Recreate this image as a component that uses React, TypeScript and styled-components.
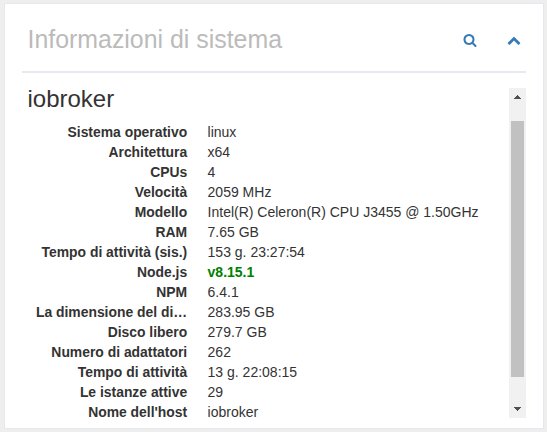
import React from "react";
import styled, { createGlobalStyle } from "styled-components";

const GlobalStyle = createGlobalStyle`
  * { box-sizing: border-box; }
  body {
    margin: 0;
    background: #eeeeee;
    color: #333333;
    font: 14px/20px "Liberation Sans", Arial, sans-serif;
    overflow: hidden;
  }
`;

const Page = styled.main`
  height: 432px;
  padding: 3px 3px 3px 4px;
`;

const Panel = styled.section`
  width: 540px;
  height: 426px;
  padding: 0 17px;
  border: 1px solid #e4e7eb;
  background: #ffffff;
`;

const PanelHeader = styled.header`
  display: flex;
  align-items: flex-start;
  height: 69px;
  border-bottom: 2px solid #e6e9ed;
  padding: 18px 5px 0 5.5px;
`;

const PanelTitle = styled.h2`
  flex: 1;
  margin: 0;
  color: #bbbbbb;
  font-size: 24.9px;
  font-weight: 400;
  line-height: 34px;
  white-space: nowrap;
`;

const Tools = styled.div`
  display: flex;
  gap: 30px;
  padding-top: 11px;
`;

const ToolButton = styled.button`
  display: block;
  width: 14px;
  height: 14px;
  padding: 0;
  border: 0;
  background: none;
  color: #337ab7;
`;

const Glyph = styled.svg`
  display: block;
  fill: currentColor;
`;

const PanelBody = styled.div`
  display: flex;
  height: 330px;
  margin-top: 15px;
`;

const Content = styled.div`
  flex: 1;
  min-width: 0;
`;

const HostName = styled.h3`
  margin: 0 0 12px;
  padding-left: 5.5px;
  font-size: 24px;
  font-weight: 400;
  line-height: 22px;
`;

const InfoList = styled.dl`
  display: grid;
  grid-template-columns: 160px 1fr;
  column-gap: 20.4px;
  grid-auto-rows: 20px;
  margin: 0;
  padding-left: 5.2px;
`;

const Label = styled.dt`
  font-weight: 700;
  font-size: 13.9px;
  text-align: right;
  white-space: nowrap;
`;

const Value = styled.dd<{ $current?: boolean }>`
  margin: 0;
  white-space: nowrap;
  color: ${(p) => (p.$current ? "#008000" : "inherit")};
  font-weight: ${(p) => (p.$current ? 700 : 400)};
`;

const Scrollbar = styled.div`
  display: flex;
  flex-direction: column;
  align-items: center;
  width: 17px;
  background: #f1f1f1;
`;

const ScrollArrow = styled.svg`
  display: block;
  flex: none;
  width: 17px;
  height: 17px;
  fill: #505050;
`;

const Track = styled.div`
  flex: 1;
  width: 13px;
  padding-top: 16px;
`;

const Thumb = styled.div`
  height: 256px;
  background: #c1c1c1;
`;

const info: { label: string; value: string; current?: boolean }[] = [
  { label: "Sistema operativo", value: "linux" },
  { label: "Architettura", value: "x64" },
  { label: "CPUs", value: "4" },
  { label: "Velocità", value: "2059 MHz" },
  { label: "Modello", value: "Intel(R) Celeron(R) CPU J3455 @ 1.50GHz" },
  { label: "RAM", value: "7.65 GB" },
  { label: "Tempo di attività (sis.)", value: "153 g. 23:27:54" },
  { label: "Node.js", value: "v8.15.1", current: true },
  { label: "NPM", value: "6.4.1" },
  { label: "La dimensione del di…", value: "283.95 GB" },
  { label: "Disco libero", value: "279.7 GB" },
  { label: "Numero di adattatori", value: "262" },
  { label: "Tempo di attività", value: "13 g. 22:08:15" },
  { label: "Le istanze attive", value: "29" },
  { label: "Nome dell'host", value: "iobroker" },
];

const SearchIcon = () => (
  <Glyph width="14" height="14" viewBox="0 0 1792 1792" aria-hidden="true">
    <path d="M1216 832q0-185-131.500-316.500t-316.500-131.500-316.500 131.500-131.500 316.500 131.500 316.500 316.500 131.500 316.500-131.500 131.500-316.500zm512 832q0 52-38 90t-90 38q-54 0-90-38l-343-342q-179 124-399 124-143 0-273.500-55.500t-225-150-150-225-55.500-273.500 55.500-273.500 150-225 225-150 273.500-55.500 273.500 55.500 225 150 150 225 55.500 273.500q0 220-124 399l343 343q37 37 37 90z" />
  </Glyph>
);

const ChevronUpIcon = () => (
  <Glyph width="14" height="14" viewBox="0 0 1792 1792" aria-hidden="true">
    <path d="M1683 1331l-166 165q-19 19-45 19t-45-19l-531-531-531 531q-19 19-45 19t-45-19l-166-165q-19-19-19-45.500t19-45.500l742-741q19-19 45-19t45 19l742 741q19 19 19 45.500t-19 45.500z" />
  </Glyph>
);

export default function App() {
  return (
    <>
      <GlobalStyle />
      <Page>
        <Panel>
          <PanelHeader>
            <PanelTitle>Informazioni di sistema</PanelTitle>
            <Tools>
              <ToolButton aria-label="Cerca">
                <SearchIcon />
              </ToolButton>
              <ToolButton aria-label="Comprimi">
                <ChevronUpIcon />
              </ToolButton>
            </Tools>
          </PanelHeader>
          <PanelBody>
            <Content>
              <HostName>iobroker</HostName>
              <InfoList>
                {info.map((item) => (
                  <React.Fragment key={item.label}>
                    <Label>{item.label}</Label>
                    <Value $current={item.current}>{item.value}</Value>
                  </React.Fragment>
                ))}
              </InfoList>
            </Content>
            <Scrollbar>
              <ScrollArrow viewBox="0 0 17 17" shapeRendering="crispEdges">
                <path d="M8 7h1v1h1v1h1v1h1v1H5v-1h1V9h1V8h1z" />
              </ScrollArrow>
              <Track>
                <Thumb />
              </Track>
              <ScrollArrow viewBox="0 0 17 17" shapeRendering="crispEdges">
                <path d="M5 6h7v1h-1v1h-1v1H9v1H8V9H7V8H6V7H5z" />
              </ScrollArrow>
            </Scrollbar>
          </PanelBody>
        </Panel>
      </Page>
    </>
  );
}
